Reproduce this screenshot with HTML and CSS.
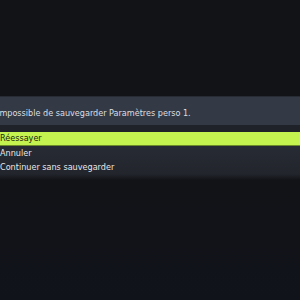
FILE: index.html
```html
<!DOCTYPE html>
<html>
<head>
<meta charset="utf-8">
<link rel="stylesheet" href="styles.css">
</head>
<body>
<div class="screen">
  <div class="dialog">
    <div class="header">Impossible de sauvegarder Paramètres perso 1.</div>
    <div class="sep"></div>
    <ul class="options">
      <li class="opt selected">Réessayer</li>
      <li class="opt">Annuler</li>
      <li class="opt">Continuer sans sauvegarder</li>
    </ul>
    <div class="fade"></div>
  </div>
</div>
</body>
</html>
```
FILE: styles.css
```css
html, body {
  margin: 0;
  padding: 0;
}
body {
  background: #121317;
  font-family: "DejaVu Sans Condensed", "DejaVu Sans", sans-serif;
  font-stretch: condensed;
  font-size: 9px;
}
.screen {
  width: 300px;
  height: 300px;
  background: linear-gradient(#121317 0%, #121317 60%, #11131b 100%);
  overflow: hidden;
}
.dialog {
  padding-top: 96px;
}
.header {
  background: #343a45;
  border-top: 1px solid #272b33;
  height: 28px;
  line-height: 32px;
  color: #dcdee1;
  margin-left: -3px;
  white-space: nowrap;
}
.sep {
  height: 7px;
  background: #1f2228;
}
.options {
  list-style: none;
  margin: 0;
  padding: 0;
  background: linear-gradient(#2a2e37, #22252c);
}
.opt {
  height: 14px;
  line-height: 14px;
  color: #e6e8ea;
  white-space: nowrap;
}
.selected {
  background: #c4f24f;
  color: #1b1f12;
  height: 13px;
  line-height: 13px;
  border-bottom: 1px solid #6c8a2a;
}
.fade {
  height: 6px;
  background: linear-gradient(#22252c, #121317);
}
```
